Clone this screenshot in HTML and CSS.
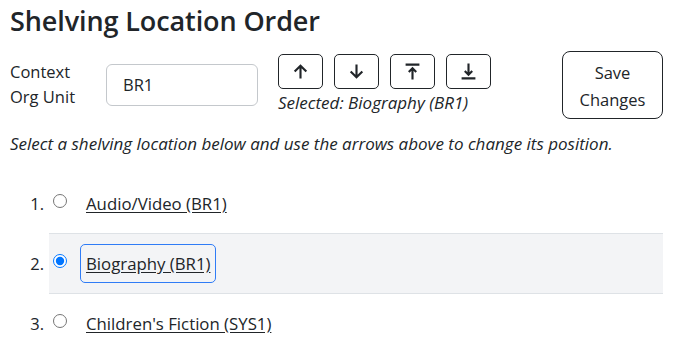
FILE: index.html
```html
<!DOCTYPE html>
<html>
<head>
<meta charset="utf-8">
<link rel="stylesheet" href="styles.css">
</head>
<body>
<div class="page">
  <h2 class="title">Shelving Location Order</h2>
  <div class="controls">
    <div class="ctx-label">Context<br>Org Unit</div>
    <div class="org-input">BR1</div>
    <div class="mover">
      <div class="arrows">
        <button class="arrow-btn" title="Move up">
          <svg viewBox="0 0 16 16" width="17" height="17"><path d="M8 14.5V2.5M2.5 8L8 2.5L13.5 8"/></svg>
        </button>
        <button class="arrow-btn" title="Move down">
          <svg viewBox="0 0 16 16" width="17" height="17"><path d="M8 1.5V13.5M2.5 8L8 13.5L13.5 8"/></svg>
        </button>
        <button class="arrow-btn" title="Move to top">
          <svg viewBox="0 0 16 16" width="17" height="17"><path d="M1.5 1.5H14.5M8 15.5V5M4.5 8.5L8 5L11.5 8.5"/></svg>
        </button>
        <button class="arrow-btn" title="Move to bottom">
          <svg viewBox="0 0 16 16" width="17" height="17"><path d="M8 0.5V11M4.5 7.5L8 11L11.5 7.5M1.5 14.5H14.5"/></svg>
        </button>
      </div>
      <div class="selected">Selected: Biography (BR1)</div>
    </div>
    <button class="save-btn">Save<br>Changes</button>
  </div>
  <p class="hint">Select a shelving location below and use the arrows above to change its position.</p>
  <ol class="locs">
    <li class="loc">
      <span class="num">1.</span>
      <div class="item">
        <input type="radio" name="loc" class="radio">
        <a class="loc-link" href="#">Audio/Video (BR1)</a>
      </div>
    </li>
    <li class="loc">
      <span class="num">2.</span>
      <div class="item is-selected">
        <input type="radio" name="loc" class="radio" checked>
        <a class="loc-link is-focused" href="#">Biography (BR1)</a>
      </div>
    </li>
    <li class="loc">
      <span class="num">3.</span>
      <div class="item">
        <input type="radio" name="loc" class="radio">
        <a class="loc-link" href="#">Children's Fiction (SYS1)</a>
      </div>
    </li>
  </ol>
</div>
</body>
</html>
```

FILE: styles.css
```css
* { box-sizing: border-box; }
html, body {
  margin: 0;
  background: #fff;
  color: #212529;
  font-family: "Open Sans", "Noto Sans", sans-serif;
  font-size: 16.5px;
  overflow: hidden;
}
.page {
  padding: 0 16px 0 10px;
}
.title {
  margin: 0;
  padding-top: 3px;
  font-size: 27px;
  font-weight: 600;
  line-height: 36px;
  letter-spacing: -0.1px;
}
.controls {
  display: flex;
  align-items: flex-start;
  margin-top: 12px;
}
.ctx-label {
  width: 96px;
  margin-top: 8px;
  line-height: 25px;
}
.org-input {
  width: 152px;
  height: 42px;
  margin-top: 13px;
  padding: 0 16px;
  border: 1px solid #c4c8cc;
  border-radius: 6px;
  line-height: 40px;
}
.mover {
  margin-left: 20px;
  margin-top: 3px;
  display: flex;
  flex-direction: column;
}
.arrows {
  display: flex;
  gap: 11px;
}
.arrow-btn {
  width: 45px;
  height: 35px;
  padding: 0;
  background: #fff;
  border: 1px solid #212529;
  border-radius: 5px;
  display: flex;
  align-items: center;
  justify-content: center;
}
.arrow-btn svg {
  fill: none;
  stroke: #212529;
  stroke-width: 2;
}
.selected {
  font-style: italic;
  font-size: 17px;
  line-height: 22px;
  margin-top: 3px;
}
.save-btn {
  margin-left: auto;
  width: 101px;
  height: 68px;
  padding: 2px 0 0;
  background: #fff;
  border: 1px solid #212529;
  border-radius: 8px;
  font: inherit;
  color: #212529;
  line-height: 27px;
}
.hint {
  margin: 13px 0 0;
  font-style: italic;
  font-size: 17px;
  line-height: 24px;
}
.locs {
  list-style: none;
  margin: 18px 0 0;
  padding: 0;
}
.loc {
  display: flex;
}
.num {
  width: 39px;
  padding-right: 5px;
  padding-top: 18px;
  text-align: right;
  line-height: 23px;
}
.item {
  flex: 1;
  display: flex;
  align-items: flex-start;
  padding: 10px 0;
  border-bottom: 1px solid transparent;
}
.item.is-selected {
  background: #f3f4f6;
  border-top: 1px solid #dee2e6;
  border-bottom: 1px solid #dee2e6;
  margin-top: -1px;
}
.radio {
  width: 14px;
  height: 14px;
  margin: 10px 0 0 4px;
}
.loc-link {
  margin-left: 13px;
  padding: 7px 5px;
  border: 1px solid transparent;
  border-radius: 5px;
  font-size: 16.8px;
  line-height: 23px;
  color: #212529;
  text-decoration: underline;
  text-underline-offset: 2px;
}
.loc-link.is-focused {
  border-color: #2f7cf6;
}
```
